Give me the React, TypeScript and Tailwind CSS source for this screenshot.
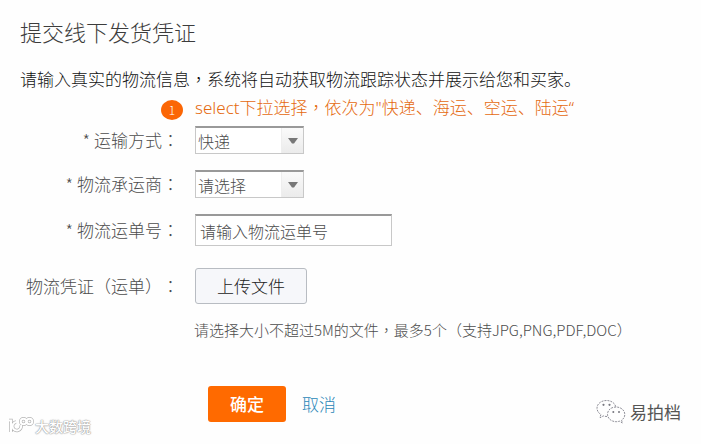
import { useState } from 'react';
import type { ReactNode } from 'react';

const METHODS = ['快递', '海运', '空运', '陆运'];

/** Sets full-width commas, colons and brackets in the middle of their cell. */
function Cn({ children }: { children: string }) {
  return (
    <>
      {children.split(/([，：（）])/).map((part, i) =>
        i % 2 === 1 ? (
          <span key={i} lang="zh-TW" className="font-['Noto_Sans_CJK_TC',sans-serif]">
            {part}
          </span>
        ) : (
          part
        ),
      )}
    </>
  );
}

function Row({
  label,
  htmlFor,
  required = false,
  children,
}: {
  label: string;
  htmlFor: string;
  required?: boolean;
  children: ReactNode;
}) {
  return (
    <div className="flex items-center gap-4">
      <label htmlFor={htmlFor} className="w-[159px] shrink-0 text-right text-[17px] leading-6 whitespace-nowrap">
        {required && <span className="mr-1">*</span>}
        <Cn>{label}</Cn>
      </label>
      {children}
    </div>
  );
}

function Select({ id, options }: { id: string; options: string[] }) {
  return (
    <div className="relative">
      <select
        id={id}
        className="block h-7 w-[109px] appearance-none border border-t-2 border-[#c8c8c8] border-t-[#999] bg-white pl-[2px] text-base leading-6 outline-none"
      >
        {options.map((option) => (
          <option key={option}>{option}</option>
        ))}
      </select>
      <span className="pointer-events-none absolute top-[2px] right-px bottom-px flex w-[22px] items-center justify-center border-l border-[#eee] bg-linear-to-b from-[#fafafa] to-[#ebebeb]">
        <svg width="10" height="6" viewBox="0 0 10 6" aria-hidden="true">
          <path d="M0 0h10L6 5.500H4z" fill="#777" />
        </svg>
      </span>
    </div>
  );
}

function WechatMark() {
  return (
    <svg width="30" height="26" viewBox="0 0 30 26" fill="none" stroke="#8f8f98" strokeDasharray="2 1" aria-hidden="true">
      <path d="M11 17.500c-1.500 0-2.500-.2-3.700-.6L4 18.800l.8-3.300C2.300 13.700 1 11.600 1 9.200 1 4.600 5.400 1.500 10.500 1.500c4.600 0 8.500 2.600 9.300 6.300" />
      <path d="M20 8c-4.900 0-8.500 3.200-8.500 7.300s3.800 7.400 8.700 7.400c1.100 0 2.200-.2 3.200-.5l3 1.800-.8-2.800c2-1.400 3.200-3.400 3.200-5.700C28.800 11.300 25 8 20 8z" />
      <g fill="#77777f" stroke="none">
        <circle cx="7.500" cy="5.800" r="1.100" />
        <circle cx="13.500" cy="5.800" r="1.100" />
        <circle cx="17.300" cy="13" r="1" />
        <circle cx="23" cy="13" r="1" />
      </g>
    </svg>
  );
}

function CrossBorderMark() {
  return (
    <svg width="26" height="18" viewBox="0 0 26 18" fill="none" aria-hidden="true">
      <g stroke="#b4b4b4" strokeWidth="3.400">
        <path d="M1 3.500h2V15M13 8a4.300 4.300 0 1 1-5-3" />
        <circle cx="15.500" cy="4.500" r="2.800" />
        <circle cx="21.500" cy="4.500" r="2.800" />
      </g>
      <g stroke="#fff" strokeWidth="2">
        <path d="M1 3.500h2V15M13 8a4.300 4.300 0 1 1-5-3" />
        <circle cx="15.500" cy="4.500" r="2.800" />
        <circle cx="21.500" cy="4.500" r="2.800" />
      </g>
    </svg>
  );
}

export default function App() {
  const [tracking, setTracking] = useState('');

  return (
    <main
      lang="zh-CN"
      className="relative min-h-screen bg-[#fefefe] px-5 pt-[15px] pb-5 font-['Noto_Sans_CJK_SC',sans-serif] font-light text-[#4c4c4c] [text-spacing-trim:space-all]"
    >
      <h1 className="text-[22px] leading-8 text-[#3c3c3c]">提交线下发货凭证</h1>
      <p className="mt-5 text-[17px] leading-6 text-[#111]">
        <Cn>请输入真实的物流信息，系统将自动获取物流跟踪状态并展示给您和买家。</Cn>
      </p>

      <form onSubmit={(e) => e.preventDefault()}>
        <div className="mt-1 flex items-end gap-3 text-[#e56a10]">
          <span className="flex w-[163px] justify-end">
            <span className="flex h-5 w-[22px] items-center justify-center rounded-[50%] bg-[#fb6605] text-xs text-white">
              1
            </span>
          </span>
          <p className="font-['Noto_Sans','Noto_Sans_CJK_SC',sans-serif] text-[17px] leading-6">
            <Cn>select下拉选择，依次为"快递、海运、空运、陆运“</Cn>
          </p>
        </div>

        <div className="mt-1.5 flex flex-col gap-4">
          <Row label="运输方式：" htmlFor="method" required>
            <Select id="method" options={METHODS} />
          </Row>
          <Row label="物流承运商：" htmlFor="carrier" required>
            <Select id="carrier" options={['请选择']} />
          </Row>
          <Row label="物流运单号：" htmlFor="tracking" required>
            <input
              id="tracking"
              value={tracking}
              onChange={(e) => setTracking(e.target.value)}
              placeholder="请输入物流运单号"
              className="h-8 w-[197px] border border-t-2 border-[#c8c8c8] border-t-[#999] bg-white px-1 text-base outline-none placeholder:text-[#4c4c4c]"
            />
          </Row>
        </div>

        <div className="mt-[22px]">
          <Row label="物流凭证（运单）：" htmlFor="upload">
            <button
              id="upload"
              type="button"
              className="h-9 w-28 rounded-[3px] border border-[#b8bcc2] bg-[#f6f7fa] text-[17px] text-[#222]"
            >
              上传文件
            </button>
          </Row>
          <p className="mt-3.5 ml-[174px] text-[15px] leading-6">
            <Cn>请选择大小不超过5M的文件，最多5个（支持JPG,PNG,PDF,DOC）</Cn>
          </p>
        </div>

        <div className="mt-11 ml-[188px] flex items-center gap-4">
          <button type="submit" className="h-9 w-[78px] rounded-[3px] bg-[#ff6a00] text-[17px] font-medium text-white">
            确定
          </button>
          <a href="#" className="text-[17px] leading-6 text-[#2a87b8]">
            取消
          </a>
        </div>
      </form>

      <div className="absolute bottom-2 left-2 flex items-center gap-px text-sm leading-5 text-white [text-shadow:0_0_1px_#999,0_0_1px_#999,0_0_2px_#bbb]">
        <CrossBorderMark />
        <span className="font-medium">大数跨境</span>
      </div>
      <div className="absolute right-5 bottom-[18px] flex items-center gap-1 text-[17px] leading-7 font-normal text-[#555]">
        <WechatMark />
        易拍档
      </div>
    </main>
  );
}
